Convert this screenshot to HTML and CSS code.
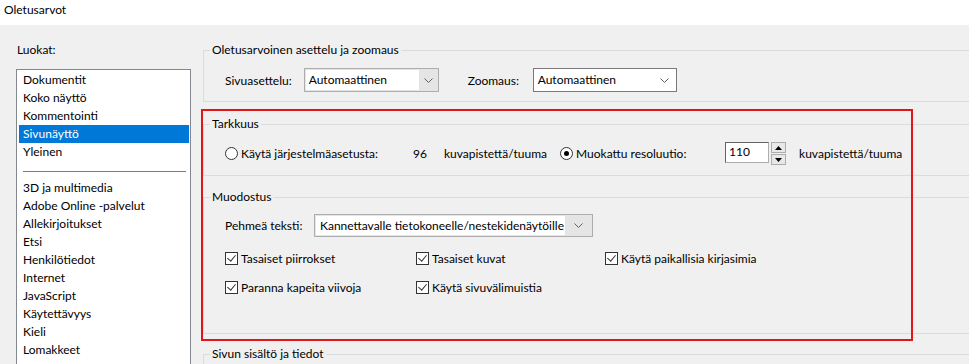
FILE: index.html
```html
<!DOCTYPE html>
<html>
<head>
    <title>Oletusarvot</title>
    <link rel="stylesheet" href="styles.css">
</head>
<body>
    <div class="titlebar">Oletusarvot</div>

    <div class="dialog">
        <div class="side">
            <div class="side-label">Luokat:</div>
            <ul class="categories">
                <li>Dokumentit</li>
                <li>Koko näyttö</li>
                <li>Kommentointi</li>
                <li class="selected">Sivunäyttö</li>
                <li>Yleinen</li>
                <li class="sep"><span></span></li>
                <li>3D ja multimedia</li>
                <li>Adobe Online -palvelut</li>
                <li>Allekirjoitukset</li>
                <li>Etsi</li>
                <li>Henkilötiedot</li>
                <li>Internet</li>
                <li>JavaScript</li>
                <li>Käytettävyys</li>
                <li>Kieli</li>
                <li>Lomakkeet</li>
            </ul>
        </div>

        <div class="panel">
            <fieldset class="group group-layout">
                <legend>Oletusarvoinen asettelu ja zoomaus</legend>
                <div class="row">
                    <span class="label">Sivuasettelu:</span>
                    <div class="combo combo-page">
                        <span class="combo-text">Automaattinen</span>
                        <span class="combo-btn"><svg width="9" height="5" viewBox="0 0 9 5"><path d="M0.5 0.5 L4.5 4.5 L8.5 0.5" fill="none" stroke="#606060"/></svg></span>
                    </div>
                    <span class="label label-zoom">Zoomaus:</span>
                    <div class="combo combo-zoom">
                        <span class="combo-text">Automaattinen</span>
                        <span class="combo-btn"><svg width="9" height="5" viewBox="0 0 9 5"><path d="M0.5 0.5 L4.5 4.5 L8.5 0.5" fill="none" stroke="#606060"/></svg></span>
                    </div>
                </div>
            </fieldset>

            <fieldset class="group group-res">
                <legend>Tarkkuus</legend>
                <div class="row">
                    <span class="radio"></span>
                    <span class="label res-system">Käytä järjestelmäasetusta:</span>
                    <span class="label res-value">96</span>
                    <span class="label res-unit">kuvapistettä/tuuma</span>
                    <span class="radio checked"></span>
                    <span class="label res-custom">Muokattu resoluutio:</span>
                    <div class="spin">
                        <span class="spin-input">110</span>
                        <span class="spin-btns">
                            <span class="spin-btn"><svg width="7" height="4" viewBox="0 0 7 4"><path d="M0 4 L3.5 0 L7 4 Z" fill="#000"/></svg></span>
                            <span class="spin-btn"><svg width="7" height="4" viewBox="0 0 7 4"><path d="M0 0 L3.5 4 L7 0 Z" fill="#000"/></svg></span>
                        </span>
                    </div>
                    <span class="label">kuvapistettä/tuuma</span>
                </div>
            </fieldset>

            <fieldset class="group group-render">
                <legend>Muodostus</legend>
                <div class="row">
                    <span class="label label-smooth">Pehmeä teksti:</span>
                    <div class="combo combo-smooth">
                        <span class="combo-text">Kannettavalle tietokoneelle/nestekidenäytöille</span>
                        <span class="combo-btn"><svg width="9" height="5" viewBox="0 0 9 5"><path d="M0.5 0.5 L4.5 4.5 L8.5 0.5" fill="none" stroke="#606060"/></svg></span>
                    </div>
                </div>
                <div class="checks">
                    <label class="check"><span class="box"></span>Tasaiset piirrokset</label>
                    <label class="check"><span class="box"></span>Tasaiset kuvat</label>
                    <label class="check"><span class="box"></span>Käytä paikallisia kirjasimia</label>
                    <label class="check"><span class="box"></span>Paranna kapeita viivoja</label>
                    <label class="check"><span class="box"></span>Käytä sivuvälimuistia</label>
                </div>
            </fieldset>

            <fieldset class="group group-content">
                <legend>Sivun sisältö ja tiedot</legend>
                <div class="row"></div>
            </fieldset>

            <div class="highlight"></div>
        </div>
    </div>
</body>
</html>
```

FILE: styles.css
```css
html, body {
    margin: 0;
    height: 100%;
    overflow: hidden;
}
body {
    font-family: "Segoe UI", Lato, sans-serif;
    font-size: 12px;
    color: #000;
    background-color: #f0f0f0;
}
.titlebar {
    height: 25px;
    line-height: 20px;
    padding-left: 4px;
    background-color: #fff;
}
.dialog {
    display: flex;
}
.side {
    width: 175px;
    margin-left: 16px;
    flex-shrink: 0;
}
.side-label {
    height: 14px;
    line-height: 14px;
    margin-top: 18px;
    margin-left: 1px;
}
.categories {
    list-style: none;
    margin: 12px 0 0 0;
    padding: 1px 1px 0 2px;
    height: 320px;
    background-color: #fff;
    border: 1px solid #828790;
}
.categories li {
    height: 18px;
    line-height: 18px;
    padding-left: 4px;
    white-space: nowrap;
}
.categories li.selected {
    background-color: #0078d7;
    color: #fff;
}
.categories li.sep {
    display: flex;
    align-items: center;
    padding: 0 3px 0 4px;
}
.categories li.sep span {
    display: block;
    width: 100%;
    height: 1px;
    margin-top: 2px;
    background-color: #3d8bd4;
}
.panel {
    position: relative;
    margin-left: 12px;
    width: 800px;
    flex-shrink: 0;
}
.group {
    margin: 0;
    padding: 0 0 0 21px;
    border: 1px solid #dcdcdc;
    min-width: 0;
}
.group legend {
    padding: 0 2px;
    margin-left: -15px;
    line-height: 14px;
    height: 14px;
}
.group-layout {
    margin-top: 18px;
    padding-bottom: 9px;
}
.group-layout .row {
    margin-top: 11px;
}
.group-res {
    margin-top: 15px;
    padding-bottom: 10px;
}
.group-res .row {
    margin-top: 11px;
}
.group-render {
    margin-top: 14px;
    padding-bottom: 37px;
}
.group-render .row {
    margin-top: 10px;
}
.group-content {
    margin-top: 13px;
    height: 40px;
}
.row {
    display: flex;
    align-items: center;
}
.label {
    white-space: nowrap;
}
.combo {
    display: flex;
    align-items: stretch;
    height: 22px;
    border: 1px solid #adadad;
    background-color: #e5e5e5;
    box-sizing: content-box;
}
.combo-text {
    flex: 1;
    background-color: #fff;
    margin: 1px 0 1px 1px;
    padding-left: 3px;
    line-height: 20px;
    white-space: nowrap;
}
.combo-btn {
    width: 19px;
    display: flex;
    align-items: center;
    justify-content: center;
}
.combo-page {
    width: 133px;
    margin-left: 12px;
}
.label-zoom {
    width: 53px;
    margin-left: 29px;
}
.combo-zoom {
    width: 142px;
    margin-left: 12px;
    border-color: #7a7a7a;
    background-color: #fff;
}
.combo-zoom .combo-text {
    margin: 0;
    padding-left: 4px;
    line-height: 22px;
}
.combo-zoom .combo-btn {
    width: 23px;
}
.label-smooth {
    width: 79px;
    margin-right: 10px;
}
.combo-smooth {
    width: 277px;
    height: 21px;
}
.combo-smooth .combo-text {
    padding-left: 4px;
    line-height: 19px;
}
.combo-smooth .combo-btn {
    width: 27px;
}
.radio {
    width: 11px;
    height: 11px;
    border: 1px solid #333;
    border-radius: 50%;
    background-color: #fff;
    margin-right: 3px;
    position: relative;
    flex-shrink: 0;
}
.radio.checked::after {
    content: "";
    position: absolute;
    left: 3px;
    top: 3px;
    width: 5px;
    height: 5px;
    border-radius: 50%;
    background-color: #000;
}
.res-system {
    width: 134px;
}
.res-value {
    margin-left: 38px;
}
.res-unit {
    margin-left: 17px;
}
.res-unit + .radio {
    margin-left: 13px;
}
.res-custom {
    width: 113px;
}
.spin {
    display: flex;
    margin-left: 36px;
    margin-right: 13px;
}
.spin-input {
    width: 39px;
    height: 19px;
    line-height: 17px;
    padding-left: 3px;
    background-color: #fff;
    border: 1px solid #adadad;
    border-top-color: #646464;
    border-left-color: #646464;
}
.spin-btns {
    display: flex;
    flex-direction: column;
    margin-left: 2px;
    gap: 1px;
}
.spin-btn {
    width: 13px;
    height: 9px;
    border: 1px solid #adadad;
    background-color: #e8e8e8;
    display: flex;
    align-items: center;
    justify-content: center;
}
.checks {
    display: grid;
    grid-template-columns: 191px 189px auto;
    row-gap: 11px;
    margin-top: 12px;
}
.check {
    display: flex;
    align-items: center;
    height: 18px;
    white-space: nowrap;
}
.box {
    width: 11px;
    height: 11px;
    border: 1px solid #333;
    background-color: #fff;
    margin-right: 3px;
    position: relative;
}
.box::after {
    content: "";
    position: absolute;
    left: 3px;
    top: 0px;
    width: 4px;
    height: 7px;
    border: solid #333;
    border-width: 0 1px 1px 0;
    transform: rotate(40deg);
}
.highlight {
    position: absolute;
    left: -2px;
    top: 84px;
    width: 708px;
    height: 228px;
    border: 2px solid #e0161b;
    pointer-events: none;
}
```
